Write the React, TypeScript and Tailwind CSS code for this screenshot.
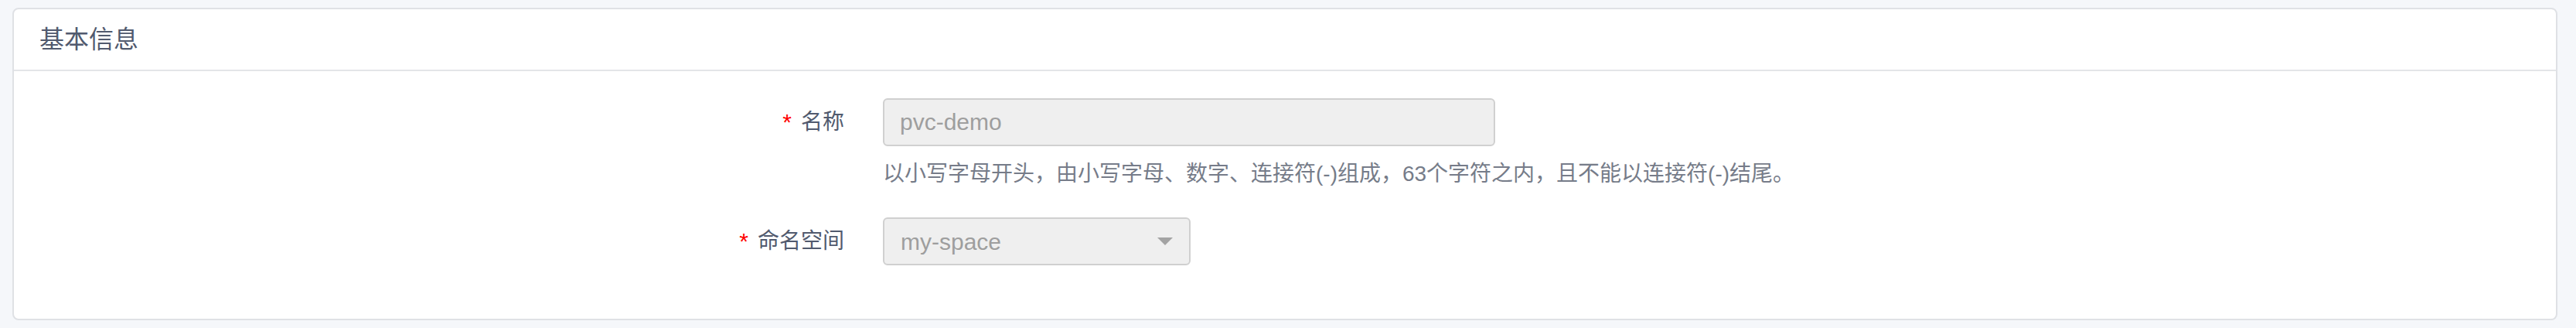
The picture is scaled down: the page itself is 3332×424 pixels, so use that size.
import React from "react";

const font = "font-['Liberation_Sans','Noto_Sans_CJK_SC',sans-serif]";

const FieldLabel = ({ text }: { text: string }) => (
  <div className="w-[1074px] shrink-0 flex justify-end items-center">
    <span className="text-[30px] leading-[40px] text-[#ff0000] mr-[12px]">*</span>
    <span className="text-[28px] leading-[40px] text-[#515a6e]">{text}</span>
  </div>
);

const App = () => {
  return (
    <div className={`min-h-[424px] bg-[#f5f7fa] pt-[10px] pb-[8px] pl-[16px] pr-[24px] ${font}`}>
      <div className="bg-white border-2 border-[#dfe1e5] rounded-[8px]">
        <div className="h-[80px] flex items-center pl-[33px] border-b-2 border-[#e3e5e8]">
          <h2 className="text-[32px] leading-[40px] text-[#515a6e]">基本信息</h2>
        </div>

        <div className="flex flex-col pt-[35px] pb-[69px]">
          <div className="flex">
            <div className="h-[62px] flex items-center">
              <FieldLabel text="名称" />
            </div>
            <div className="ml-[50px] flex flex-col">
              <input
                type="text"
                disabled
                placeholder="pvc-demo"
                className="w-[792px] h-[62px] px-[20px] bg-[#efefef] border-2 border-[#d0d0d0] rounded-[6px] text-[30px] text-[#999] placeholder:text-[#9e9e9e] outline-none"
              />
              <p className="mt-[16px] text-[28px] leading-[40px] text-[#767c89]">
                以小写字母开头，由小写字母、数字、连接符(-)组成，63个字符之内，且不能以连接符(-)结尾。
              </p>
            </div>
          </div>

          <div className="flex mt-[36px]">
            <div className="h-[62px] flex items-center">
              <FieldLabel text="命名空间" />
            </div>
            <div className="ml-[50px]">
              <div className="w-[398px] h-[62px] pl-[21px] pr-[21px] bg-[#efefef] border-2 border-[#d0d0d0] rounded-[6px] flex items-center justify-between">
                <span className="text-[30px] text-[#9e9e9e]">my-space</span>
                <svg width="20" height="10" viewBox="0 0 20 10">
                  <path d="M0 0 L20 0 L10 10 Z" fill="#a3a3a3" />
                </svg>
              </div>
            </div>
          </div>
        </div>
      </div>
    </div>
  );
};

export default App;
